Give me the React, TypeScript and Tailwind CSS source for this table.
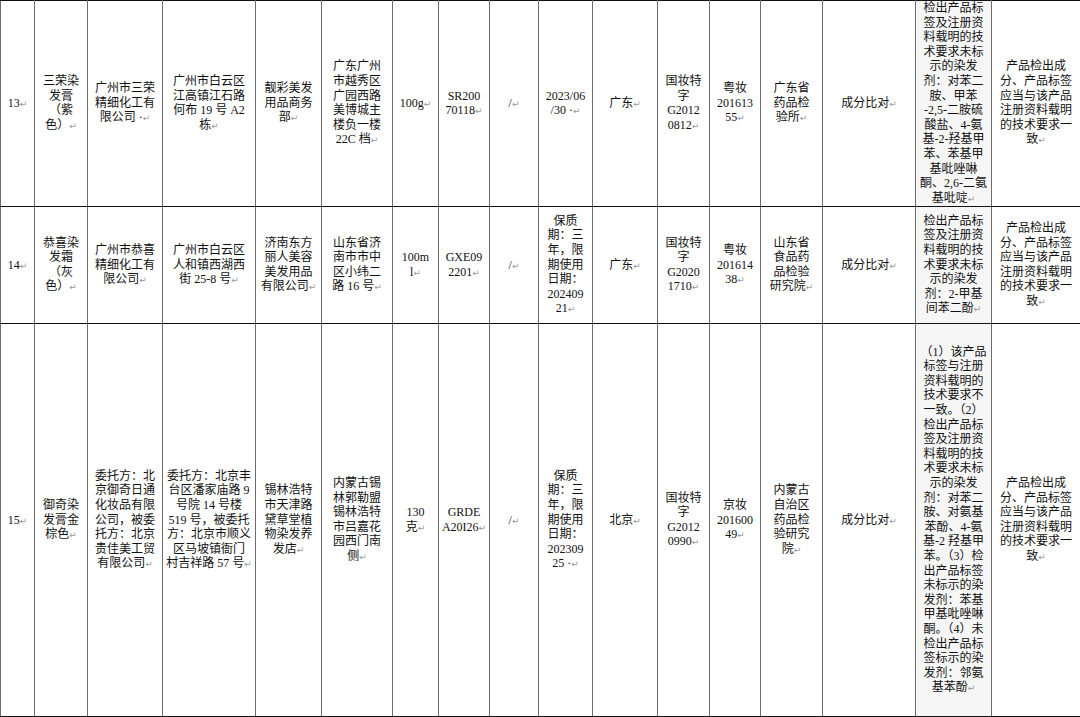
const widths = [34, 53, 75, 93, 66, 71, 46, 51, 49, 54, 65, 52, 51, 62, 93, 76, 89];

const conclusion = ['产品检出成', '分、产品标签', '应当与该产品', '注册资料载明', '的技术要求一', '致'];

const rows: { height: string; cells: string[][] }[] = [
    {
        height: 'h-[203px]',
        cells: [
            ['13'],
            ['三荣染', '发膏', '（紫', '色）'],
            ['广州市三荣', '精细化工有', '限公司 ·'],
            ['广州市白云区', '江高镇江石路', '何布 19 号 A2', '栋'],
            ['靓彩美发', '用品商务', '部'],
            ['广东广州', '市越秀区', '广园西路', '美博城主', '楼负一楼', '22C 档'],
            ['100g'],
            ['SR200', '70118'],
            ['/'],
            ['2023/06', '/30 ·'],
            ['广东'],
            ['国妆特', '字', 'G2012', '0812'],
            ['粤妆', '201613', '55'],
            ['广东省', '药品检', '验所'],
            ['成分比对'],
            [
                '检出产品标',
                '签及注册资',
                '料载明的技',
                '术要求未标',
                '示的染发',
                '剂：对苯二',
                '胺、甲苯',
                '-2,5-二胺硫',
                '酸盐、4-氨',
                '基-2-羟基甲',
                '苯、苯基甲',
                '基吡唑啉',
                '酮、2,6-二氨',
                '基吡啶',
            ],
            conclusion,
        ],
    },
    {
        height: 'h-[117px]',
        cells: [
            ['14'],
            ['恭喜染', '发霜', '（灰', '色）'],
            ['广州市恭喜', '精细化工有', '限公司'],
            ['广州市白云区', '人和镇西湖西', '街 25-8 号'],
            ['济南东方', '丽人美容', '美发用品', '有限公司'],
            ['山东省济', '南市市中', '区小纬二', '路 16 号'],
            ['100m', 'l'],
            ['GXE09', '2201'],
            ['/'],
            ['保质', '期：三', '年，限', '期使用', '日期：', '202409', '21'],
            ['广东'],
            ['国妆特', '字', 'G2020', '1710'],
            ['粤妆', '201614', '38'],
            ['山东省', '食品药', '品检验', '研究院'],
            ['成分比对'],
            ['检出产品标', '签及注册资', '料载明的技', '术要求未标', '示的染发', '剂：2-甲基', '间苯二酚'],
            conclusion,
        ],
    },
    {
        height: 'h-[393px]',
        cells: [
            ['15'],
            ['御奇染', '发膏金', '棕色'],
            ['委托方：北', '京御奇日通', '化妆品有限', '公司，被委', '托方：北京', '贵佳美工贸', '有限公司'],
            ['委托方：北京丰', '台区潘家庙路 9', '号院 14 号楼', '519 号，被委托', '方：北京市顺义', '区马坡镇衙门', '村吉祥路 57 号'],
            ['锡林浩特', '市天津路', '黛草堂植', '物染发养', '发店'],
            ['内蒙古锡', '林郭勒盟', '锡林浩特', '市吕嘉花', '园西门南', '侧'],
            ['130', '克'],
            ['GRDE', 'A20I26'],
            ['/'],
            ['保质', '期：三', '年，限', '期使用', '日期：', '202309', '25 ·'],
            ['北京'],
            ['国妆特', '字', 'G2012', '0990'],
            ['京妆', '201600', '49'],
            ['内蒙古', '自治区', '药品检', '验研究', '院'],
            ['成分比对'],
            [
                '（1）该产品',
                '标签与注册',
                '资料载明的',
                '技术要求不',
                '一致。（2）',
                '检出产品标',
                '签及注册资',
                '料载明的技',
                '术要求未标',
                '示的染发',
                '剂：对苯二',
                '胺、对氨基',
                '苯酚、4-氨',
                '基-2 羟基甲',
                '苯。（3）检',
                '出产品标签',
                '未标示的染',
                '发剂：苯基',
                '甲基吡唑啉',
                '酮。（4）未',
                '检出产品标',
                '签标示的染',
                '发剂：邻氨',
                '基苯酚',
            ],
            conclusion,
        ],
    },
];

function Cell({ lines, shaded }: { lines: string[]; shaded: boolean }) {
    return (
        <td
            className={`border-x border-x-[#6b6b6b] border-y border-y-[#111] p-0 align-middle text-center ${
                shaded ? 'bg-[#f6f6f6]' : 'bg-white'
            }`}
        >
            {lines.map((line, i) => (
                <div key={i} className="whitespace-nowrap">
                    {line}
                    {i === lines.length - 1 && (
                        <span className="text-[9px] text-[#9a9a9a] font-['DejaVu_Sans',sans-serif]">↵</span>
                    )}
                </div>
            ))}
        </td>
    );
}

export default function App() {
    return (
        <div className="w-[1080px] h-[717px] overflow-hidden bg-white">
            <table className="table-fixed border-collapse w-[1080px] text-[12px] leading-[14.6px] text-[#111] font-['Liberation_Serif','Noto_Sans_CJK_SC',serif]">
                <colgroup>
                    {widths.map((w, i) => (
                        <col key={i} style={{ width: w }} />
                    ))}
                </colgroup>
                <tbody>
                    {rows.map((row, r) => (
                        <tr key={r} className={row.height}>
                            {row.cells.map((lines, c) => (
                                <Cell key={c} lines={lines} shaded={c === 15} />
                            ))}
                        </tr>
                    ))}
                </tbody>
            </table>
        </div>
    );
}
